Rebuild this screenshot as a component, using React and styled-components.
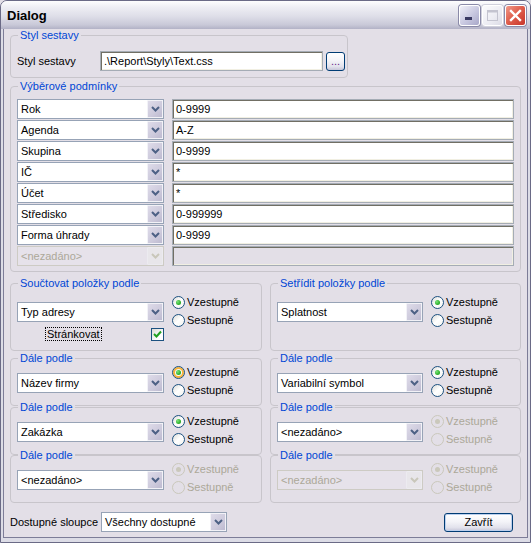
import React from "react";
import styled, { createGlobalStyle } from "styled-components";

const GlobalStyle = createGlobalStyle`
  html, body {
    margin: 0;
    padding: 0;
    background: #e3dfe7;
  }
  body {
    font-family: "Liberation Sans", Arial, sans-serif;
    font-size: 11px;
    color: #000;
  }
  * {
    box-sizing: border-box;
  }
`;

const Window = styled.div`
  width: 531px;
  height: 543px;
  display: flex;
  flex-direction: column;
  border: 1px solid #6a6a86;
  border-radius: 7px 7px 0 0;
  overflow: hidden;
  background: #dcdce6;
`;

const TitleBar = styled.div`
  height: 28px;
  flex: none;
  display: flex;
  align-items: flex-start;
  justify-content: space-between;
  padding: 4px 4px 0 6px;
  background: linear-gradient(
    to bottom,
    #fdfdfe 0%,
    #eeeef4 22%,
    #dedee8 55%,
    #c9c9d8 85%,
    #b2b2c6 100%
  );
`;

const Title = styled.span`
  font-weight: bold;
  font-size: 13px;
  line-height: 16px;
  padding-top: 3px;
  color: #000;
`;

const CaptionButtons = styled.div`
  display: flex;
  gap: 2px;
`;

const CaptionButton = styled.div`
  width: 21px;
  height: 21px;
  border-radius: 3px;
  border: 1px solid #fff;
  display: flex;
  align-items: center;
  justify-content: center;
  background: ${({ $kind }) =>
    $kind === "close"
      ? "linear-gradient(135deg, #f09a8a 0%, #e0604e 45%, #c8352a 100%)"
      : $kind === "max"
      ? "linear-gradient(135deg, #fbfbfd 0%, #ececf3 60%, #dcdce6 100%)"
      : "linear-gradient(135deg, #f0f0f8 0%, #c8c8e0 55%, #a8a8c8 100%)"};
  box-shadow: ${({ $kind }) =>
    $kind === "max" ? "0 0 0 1px #d0d0dc" : "0 0 0 1px #8a8aa8"};
`;

const Body = styled.div`
  flex: 1;
  display: flex;
  flex-direction: column;
  background: #e3dfe7;
  border-left: 2px solid #dcdce6;
  border-right: 2px solid #dcdce6;
  border-bottom: 4px solid #dcdce6;
  box-shadow: inset 1px 0 #7d7d98, inset -1px 0 #7d7d98, inset 0 -1px #7d7d98;
  padding: 0 7px;
`;

const GroupBox = styled.div`
  position: relative;
  border: 1px solid #c8c5cb;
  border-radius: 4px;
  width: ${({ $w }) => ($w ? `${$w}px` : "auto")};
  margin-top: ${({ $mt }) => $mt || 0}px;
  padding: ${({ $pad }) => $pad};
`;

const GroupCaption = styled.span`
  position: absolute;
  top: -7px;
  left: 7px;
  padding: 0 2px;
  line-height: 13px;
  background: #e3dfe7;
  color: #0046d5;
`;

const Row = styled.div`
  display: flex;
  align-items: center;
  gap: ${({ $gap }) => $gap || 0}px;
`;

const FieldLabel = styled.span`
  width: ${({ $w }) => $w}px;
  flex: none;
  line-height: 13px;
`;

const TextBox = styled.div`
  width: ${({ $w }) => ($w ? `${$w}px` : "auto")};
  height: 20px;
  display: flex;
  align-items: center;
  padding: 0 3px 1px 3px;
  border: 1px solid #a5acb5;
  box-shadow: inset 1px 1px 0 #716f64, inset -1px -1px 0 #f1efe2;
  background: ${({ $disabled }) => ($disabled ? "#e3dfe7" : "#fff")};
  white-space: nowrap;
`;

const ConditionGrid = styled.div`
  display: grid;
  grid-template-columns: 147px 1fr;
  column-gap: 8px;
  row-gap: 1px;
`;

const Combo = styled.div`
  width: ${({ $w }) => $w}px;
  height: 20px;
  flex: none;
  display: flex;
  align-items: center;
  border: 1px solid ${({ $disabled }) => ($disabled ? "#cdcbc4" : "#97a3b6")};
  background: ${({ $disabled }) => ($disabled ? "#e6e2ea" : "#fff")};
  color: ${({ $disabled }) => ($disabled ? "#aca899" : "#000")};
`;

const ComboText = styled.span`
  flex: 1;
  padding-left: 3px;
  white-space: nowrap;
  overflow: hidden;
`;

const DropButton = styled.div`
  width: 16px;
  height: 18px;
  flex: none;
  display: flex;
  align-items: center;
  justify-content: center;
  border: 1px solid ${({ $disabled }) => ($disabled ? "#ecebf0" : "#f2f2f7")};
  border-radius: 1px;
  background: ${({ $disabled }) =>
    $disabled
      ? "#e8e6ea"
      : "linear-gradient(135deg, #dedbe9 0%, #cdcadc 60%, #bdbad0 100%)"};
`;

const SortColumns = styled.div`
  display: grid;
  grid-template-columns: 252px 251px;
  column-gap: 8px;
  margin-top: 11px;
`;

const Column = styled.div`
  display: flex;
  flex-direction: column;
`;

const SortBody = styled.div`
  display: flex;
  align-items: flex-start;
`;

const ComboColumn = styled.div`
  width: ${({ $w }) => $w}px;
  flex: none;
  display: flex;
  flex-direction: column;
  padding-top: ${({ $pt }) => $pt}px;
`;

const RadioGroup = styled.div`
  display: flex;
  flex-direction: column;
  margin-left: 8px;
`;

const RadioRow = styled.div`
  height: 18px;
  display: flex;
  align-items: center;
  color: ${({ $disabled }) => ($disabled ? "#aca899" : "#000")};
`;

const RadioCircle = styled.span`
  width: 13px;
  height: 13px;
  flex: none;
  border-radius: 50%;
  display: flex;
  align-items: center;
  justify-content: center;
  border: 1px solid ${({ $disabled }) => ($disabled ? "#cac8bb" : "#1c5180")};
  background: ${({ $disabled }) =>
    $disabled
      ? "#e3dfe7"
      : "linear-gradient(135deg, #dcdcd7 0%, #ffffff 50%, #f4f4f0 100%)"};
  box-shadow: ${({ $hot }) => ($hot ? "inset 0 0 0 2px #f8b33a" : "none")};
  margin-right: 2px;
`;

const RadioDot = styled.span`
  width: 5px;
  height: 5px;
  border-radius: 50%;
  background: ${({ $disabled }) =>
    $disabled
      ? "#cac8bb"
      : "radial-gradient(circle at 35% 35%, #7be37a 0%, #2fb22e 60%, #1a8c19 100%)"};
`;

const PageRow = styled.div`
  display: flex;
  align-items: center;
  justify-content: space-between;
  margin-top: 5px;
  padding-left: 28px;
  height: 14px;
`;

const FocusText = styled.span`
  border: 1px dotted #000;
  padding: 0 1px;
  line-height: 12px;
`;

const CheckBox = styled.span`
  width: 13px;
  height: 13px;
  display: flex;
  align-items: center;
  justify-content: center;
  border: 1px solid #1c5180;
  background: linear-gradient(135deg, #dcdcd7 0%, #ffffff 70%);
`;

const FooterRow = styled.div`
  display: flex;
  align-items: center;
  margin-top: 9px;
`;

const PushButton = styled.div`
  width: ${({ $w }) => $w}px;
  height: ${({ $h }) => $h}px;
  flex: none;
  display: flex;
  align-items: center;
  justify-content: center;
  border: 1px solid #003c74;
  border-radius: 3px;
  background: linear-gradient(
    to bottom,
    #ffffff 0%,
    #f4f4f8 45%,
    #e2e2ec 80%,
    #c6c6d8 100%
  );
  box-shadow: ${({ $default }) =>
    $default ? "inset 0 0 0 1px #bcd0ee" : "none"};
  color: ${({ $tint }) => $tint || "#000"};
  margin-left: ${({ $ml }) => ($ml === "auto" ? "auto" : `${$ml || 0}px`)};
  margin-right: ${({ $mr }) => $mr || 0}px;
`;

function Chevron({ disabled }) {
  return (
    <svg width="9" height="6" viewBox="0 0 9 6">
      <polyline
        points="1,1 4.5,4.5 8,1"
        fill="none"
        stroke={disabled ? "#c9c7ba" : "#4d6185"}
        strokeWidth="2"
      />
    </svg>
  );
}

function ComboBox({ value, width = 147, disabled }) {
  return (
    <Combo $w={width} $disabled={disabled}>
      <ComboText>{value}</ComboText>
      <DropButton $disabled={disabled}>
        <Chevron disabled={disabled} />
      </DropButton>
    </Combo>
  );
}

function Radio({ label, checked, disabled, hot }) {
  return (
    <RadioRow $disabled={disabled}>
      <RadioCircle $disabled={disabled} $hot={hot}>
        {checked && <RadioDot $disabled={disabled} />}
      </RadioCircle>
      {label}
    </RadioRow>
  );
}

function Direction({ disabled, hot }) {
  return (
    <RadioGroup>
      <Radio label="Vzestupně" checked disabled={disabled} hot={hot} />
      <Radio label="Sestupně" disabled={disabled} />
    </RadioGroup>
  );
}

const conditions = [
  ["Rok", "0-9999"],
  ["Agenda", "A-Z"],
  ["Skupina", "0-9999"],
  ["IČ", "*"],
  ["Účet", "*"],
  ["Středisko", "0-999999"],
  ["Forma úhrady", "0-9999"]
];

function SortGroup({ title, value, width, comboDisabled, radiosDisabled, hot, mt }) {
  return (
    <GroupBox $mt={mt} $pad="4px 6px 6px 6px">
      <GroupCaption>{title}</GroupCaption>
      <SortBody>
        <ComboColumn $w={width} $pt={10}>
          <ComboBox value={value} width={width} disabled={comboDisabled} />
        </ComboColumn>
        <Direction disabled={radiosDisabled} hot={hot} />
      </SortBody>
    </GroupBox>
  );
}

export default function App() {
  return (
    <>
      <GlobalStyle />
      <Window>
        <TitleBar>
          <Title>Dialog</Title>
          <CaptionButtons>
            <CaptionButton $kind="min">
              <svg width="19" height="19" viewBox="0 0 19 19">
                <rect x="5" y="11" width="7" height="3" fill="#3a3a62" />
              </svg>
            </CaptionButton>
            <CaptionButton $kind="max">
              <svg width="19" height="19" viewBox="0 0 19 19">
                <rect
                  x="4.5"
                  y="4.5"
                  width="10"
                  height="10"
                  fill="none"
                  stroke="#c4c4d0"
                  strokeWidth="1"
                />
                <rect x="4.5" y="4.5" width="10" height="2" fill="#c4c4d0" />
              </svg>
            </CaptionButton>
            <CaptionButton $kind="close">
              <svg width="19" height="19" viewBox="0 0 19 19">
                <path
                  d="M5 5 L14 14 M14 5 L5 14"
                  stroke="#fff"
                  strokeWidth="2.4"
                  strokeLinecap="square"
                />
              </svg>
            </CaptionButton>
          </CaptionButtons>
        </TitleBar>

        <Body>
          <GroupBox $w={338} $mt={6} $pad="15px 2px 6px 6px">
            <GroupCaption>Styl sestavy</GroupCaption>
            <Row>
              <FieldLabel $w={83}>Styl sestavy</FieldLabel>
              <TextBox $w={223}>.\Report\Styly\Text.css</TextBox>
              <PushButton $w={19} $h={19} $ml={3} $tint="#6a2a8a">
                ...
              </PushButton>
            </Row>
          </GroupBox>

          <GroupBox $mt={8} $pad="12px 6px 5px 6px">
            <GroupCaption>Výběrové podmínky</GroupCaption>
            <ConditionGrid>
              {conditions.map(([field, range]) => (
                <React.Fragment key={field}>
                  <ComboBox value={field} />
                  <TextBox>{range}</TextBox>
                </React.Fragment>
              ))}
              <ComboBox value="<nezadáno>" disabled />
              <TextBox $disabled />
            </ConditionGrid>
          </GroupBox>

          <SortColumns>
            <Column>
              <GroupBox $pad="9px 6px 9px 6px">
                <GroupCaption>Součtovat položky podle</GroupCaption>
                <SortBody>
                  <ComboColumn $w={147} $pt={9}>
                    <ComboBox value="Typ adresy" />
                    <PageRow>
                      <FocusText>Stránkovat</FocusText>
                      <CheckBox>
                        <svg width="9" height="9" viewBox="0 0 9 9">
                          <polyline
                            points="1,4 3.5,6.5 8,1.5"
                            fill="none"
                            stroke="#21a121"
                            strokeWidth="2"
                          />
                        </svg>
                      </CheckBox>
                    </PageRow>
                  </ComboColumn>
                  <Direction />
                </SortBody>
              </GroupBox>
              <SortGroup title="Dále podle" value="Název firmy" width={147} hot mt={7} />
              <SortGroup title="Dále podle" value="Zakázka" width={147} mt={1} />
              <SortGroup
                title="Dále podle"
                value="<nezadáno>"
                width={147}
                radiosDisabled
                mt={0}
              />
            </Column>
            <Column>
              <GroupBox $pad="9px 6px 9px 6px">
                <GroupCaption>Setřídit položky podle</GroupCaption>
                <SortBody>
                  <ComboColumn $w={146} $pt={9}>
                    <ComboBox value="Splatnost" width={146} />
                    <PageRow />
                  </ComboColumn>
                  <Direction />
                </SortBody>
              </GroupBox>
              <SortGroup title="Dále podle" value="Variabilní symbol" width={146} mt={7} />
              <SortGroup
                title="Dále podle"
                value="<nezadáno>"
                width={146}
                radiosDisabled
                mt={1}
              />
              <SortGroup
                title="Dále podle"
                value="<nezadáno>"
                width={146}
                comboDisabled
                radiosDisabled
                mt={0}
              />
            </Column>
          </SortColumns>

          <FooterRow>
            <FieldLabel $w={91}>Dostupné sloupce</FieldLabel>
            <ComboBox value="Všechny dostupné" width={126} />
            <PushButton $w={69} $h={19} $ml="auto" $mr={8} $default>
              Zavřít
            </PushButton>
          </FooterRow>
        </Body>
      </Window>
    </>
  );
}
